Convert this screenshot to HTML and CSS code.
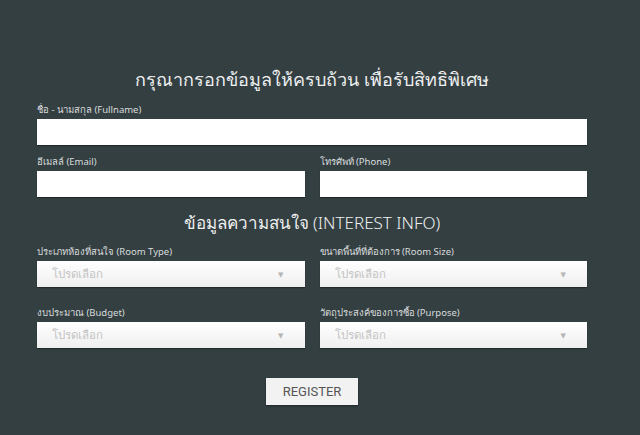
FILE: index.html
```html
<!DOCTYPE html>
<html lang="th">
<head>
<meta charset="utf-8">
<title>Register</title>
<link rel="stylesheet" href="styles.css">
</head>
<body>
<form class="form">
  <h1 class="title">กรุณากรอกข้อมูลให้ครบถ้วน เพื่อรับสิทธิพิเศษ</h1>
  <div class="field">
    <label class="label">ชื่อ - นามสกุล (Fullname)</label>
    <div class="input"></div>
  </div>
  <div class="row row-tight">
    <div class="field">
      <label class="label">อีเมลล์ (Email)</label>
      <div class="input"></div>
    </div>
    <div class="field">
      <label class="label">โทรศัพท์ (Phone)</label>
      <div class="input"></div>
    </div>
  </div>
  <h2 class="subtitle">ข้อมูลความสนใจ (INTEREST INFO)</h2>
  <div class="row">
    <div class="field">
      <label class="label">ประเภทห้องที่สนใจ (Room Type)</label>
      <div class="select"><span>โปรดเลือก</span><span class="arrow">▼</span></div>
    </div>
    <div class="field">
      <label class="label">ขนาดพื้นที่ที่ต้องการ (Room Size)</label>
      <div class="select"><span>โปรดเลือก</span><span class="arrow">▼</span></div>
    </div>
  </div>
  <div class="row row-wide">
    <div class="field">
      <label class="label">งบประมาณ (Budget)</label>
      <div class="select"><span>โปรดเลือก</span><span class="arrow">▼</span></div>
    </div>
    <div class="field">
      <label class="label">วัตถุประสงค์ของการซื้อ (Purpose)</label>
      <div class="select"><span>โปรดเลือก</span><span class="arrow">▼</span></div>
    </div>
  </div>
  <div class="actions">
    <button type="button" class="btn">REGISTER</button>
  </div>
</form>
</body>
</html>
```

FILE: styles.css
```css
html, body {
  margin: 0;
  padding: 0;
  background: #343f42;
  height: 100%;
}
body {
  font-family: "Noto Sans", "Open Sans", "DejaVu Sans", sans-serif;
  color: #e6e6e6;
}
.form {
  width: 550px;
  margin: 0 0 0 37px;
  padding-top: 64px;
  display: flex;
  flex-direction: column;
}
.title {
  margin: 0 0 9px;
  font-size: 18px;
  line-height: 30px;
  font-weight: 300;
  text-align: center;
  color: #eef0f0;
}
.subtitle {
  margin: 12px 0 8px;
  font-size: 17px;
  line-height: 28px;
  font-weight: 300;
  text-align: center;
  color: #eef0f0;
}
.row {
  display: grid;
  grid-template-columns: 1fr 1fr;
  column-gap: 15px;
}
.row-tight {
  margin-top: 10px;
}
.row-wide {
  margin-top: 19px;
}
.field {
  display: flex;
  flex-direction: column;
}
.label {
  font-size: 9.5px;
  line-height: 14px;
  margin-bottom: 2px;
  color: #d8dcdc;
}
.input {
  height: 26px;
  background: #fff;
  box-shadow: 0 1px 1px rgba(0,0,0,0.35);
}
.select {
  height: 26px;
  background: linear-gradient(#ffffff, #efefef);
  box-shadow: 0 1px 1px rgba(0,0,0,0.35);
  display: flex;
  align-items: center;
  justify-content: space-between;
  padding: 0 21px 0 15px;
  font-size: 11.5px;
  color: #c4c4c4;
}
.arrow {
  font-size: 7px;
  color: #b5b5b5;
}
.actions {
  display: flex;
  justify-content: center;
  margin-top: 30px;
}
.btn {
  width: 92px;
  height: 27px;
  border: 0;
  background: #f2f2f2;
  box-shadow: 0 1px 2px rgba(0,0,0,0.4);
  font-family: Roboto, "Liberation Sans", sans-serif;
  font-size: 13px;
  color: #555;
  padding: 0;
}
```
